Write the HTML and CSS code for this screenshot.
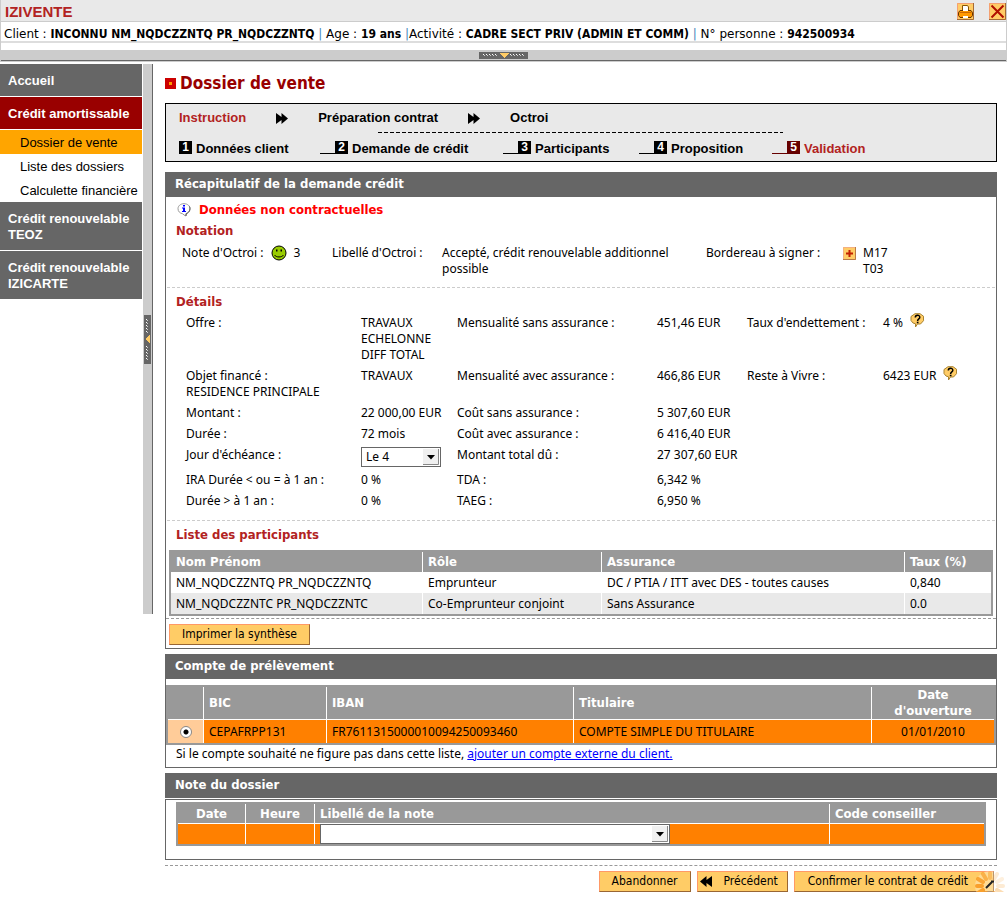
FILE: index.html
```html
<!DOCTYPE html>
<html lang="fr">
<head>
<meta charset="utf-8">
<title>IZIVENTE</title>
<link rel="stylesheet" href="styles.css">
</head>
<body>
<header class="top">
  <div class="brand-bar">
    <h1 class="brand">IZIVENTE</h1>
    <div class="brand-tools">
      <button class="tool" type="button" aria-label="Imprimer">
        <svg width="17" height="17" viewBox="0 0 17 17"><rect width="17" height="17" fill="#fc6"/><path d="M.5 17V.5H17" fill="none" stroke="#f4a070"/><path d="M16.500 0v16.500H0" fill="none" stroke="#a66a33"/><path d="M5.500 8V2.500h5L11.500 4v4" fill="#fff" stroke="#850"/><path d="M3 7.500h11l1.500 2v3l-1.500 2H3l-1.500-2v-3z" fill="#f90" stroke="#630"/><path d="M2.500 9.500h12" stroke="#c60"/><path d="M6 7h5v1H6z" fill="#fff"/><path d="M6 13h5v2H6z" fill="#fff"/></svg>
      </button>
      <button class="tool" type="button" aria-label="Fermer">
        <svg width="17" height="17" viewBox="0 0 17 17"><rect width="17" height="17" fill="#fc6"/><path d="M.5 17V.5H17" fill="none" stroke="#f4a070"/><path d="M16.500 0v16.500H0" fill="none" stroke="#a66a33"/><path d="M2.500 2.500l12 12M14.500 2.500l-12 12" stroke="#b01000" stroke-width="2"/></svg>
      </button>
    </div>
  </div>
  <p class="client">Client : <b>INCONNU NM_NQDCZZNTQ PR_NQDCZZNTQ</b> <i class="bar">|</i> Age : <b>19 ans</b> <i class="bar">|</i>Activité : <b>CADRE SECT PRIV (ADMIN ET COMM)</b> <i class="bar">|</i> N° personne : <b>942500934</b></p>
  <div class="fold">
    <svg width="49" height="7" viewBox="0 0 49 7" shape-rendering="crispEdges"><rect width="49" height="7" fill="#666"/><path d="M4 2.500h14M31 2.500h14" stroke="#fff" stroke-dasharray="1 2"/><path d="M5 3.500h14M32 3.500h14" stroke="#ccc" stroke-dasharray="1 2"/><path d="M20 1h10l-5 5z" fill="#fc6"/></svg>
  </div>
</header>

<div class="page">
  <nav class="side" aria-label="Menu">
    <a class="side-main" href="#accueil">Accueil</a>
    <a class="side-main side-open" href="#amortissable">Crédit amortissable</a>
    <div class="side-group">
      <a class="side-sub side-current" href="#dossier">Dossier de vente</a>
      <a class="side-sub" href="#liste">Liste des dossiers</a>
      <a class="side-sub" href="#calculette">Calculette financière</a>
    </div>
    <a class="side-main" href="#teoz">Crédit renouvelable TEOZ</a>
    <a class="side-main" href="#izicarte">Crédit renouvelable IZICARTE</a>
  </nav>
  <div class="splitter">
    <svg width="7" height="49" viewBox="0 0 7 49" shape-rendering="crispEdges"><rect width="7" height="49" fill="#666"/><path d="M2.500 4v14M2.500 31v14" stroke="#fff" stroke-dasharray="1 2"/><path d="M3.500 5v14M3.500 32v14" stroke="#ccc" stroke-dasharray="1 2"/><path d="M6 19v10L1 24z" fill="#fc6"/></svg>
  </div>

  <main class="main">
    <h2 class="title"><svg width="11" height="11" viewBox="0 0 11 11"><rect width="11" height="11" fill="#c00"/><rect x="4" y="4" width="3" height="3" fill="#f90"/></svg>Dossier de vente</h2>

    <section class="steps">
      <div class="phases">
        <span class="on">Instruction</span>
        <svg width="12" height="11" viewBox="0 0 12 11"><path d="M0 0l5.500 4V0L12 5.500 5.500 11V7L0 11z"/></svg>
        <span>Préparation contrat</span>
        <svg width="12" height="11" viewBox="0 0 12 11"><path d="M0 0l5.500 4V0L12 5.500 5.500 11V7L0 11z"/></svg>
        <span>Octroi</span>
      </div>
      <div class="dash"></div>
      <ol class="stages">
        <li class="stage"><b class="num">1</b>Données client</li>
        <li class="stage"><i class="lead"></i><b class="num">2</b>Demande de crédit</li>
        <li class="stage"><i class="lead"></i><b class="num">3</b>Participants</li>
        <li class="stage"><i class="lead"></i><b class="num">4</b>Proposition</li>
        <li class="stage on"><i class="lead"></i><b class="num">5</b>Validation</li>
      </ol>
    </section>

    <section class="panel">
      <h3 class="panel-head">Récapitulatif de la demande crédit</h3>
      <div class="panel-body">
        <p class="warn"><svg width="14" height="14" viewBox="0 0 14 14"><path d="M7 .7c3.500 0 6 2.200 6 5s-2 4.400-4 4.900L8.500 13 5.500 10.700C3 10.300 1 8.500 1 5.700S3.500.7 7 .7z" fill="#fff" stroke="#999"/><path d="M12.500 3.500c1.200 3-.2 6-3.200 7.200L9 13" fill="none" stroke="#555"/><path d="M6 2h2v1.500H6zM5 4.500h3V8h1v1H5V8h1V5.500H5z" fill="#00f"/></svg>Données non contractuelles</p>
        <h4 class="sub">Notation</h4>
        <div class="notation">
          <span class="inline">Note d'Octroi : <svg width="16" height="16" viewBox="0 0 16 16"><circle cx="8" cy="8" r="7" fill="#9c0" stroke="#000"/><path d="M5 4.500h1.500v2H5zM9.500 4.500H11v2H9.500z"/><path d="M3.500 10c1.500 2.600 7.500 2.600 9 0" fill="none" stroke="#000"/></svg> 3</span>
          <span>Libellé d'Octroi :</span>
          <span class="wide">Accepté, crédit renouvelable additionnel possible</span>
          <span>Bordereau à signer :</span>
          <span class="slips"><button class="plus" type="button" aria-label="Ouvrir le bordereau"><svg width="13" height="13" viewBox="0 0 13 13"><rect width="13" height="13" fill="#fc6"/><path d="M.5 13V.5H13" fill="none" stroke="#f4b080"/><path d="M12.500 0v12.500H0" fill="none" stroke="#b97a48"/><path d="M3 6.500h7M6.500 3v7" stroke="#c22000" stroke-width="2"/></svg></button><span>M17<br>T03</span></span>
        </div>
        <h4 class="sub ruled">Détails</h4>
        <div class="details">
          <span>Offre :</span><span>TRAVAUX<br>ECHELONNE<br>DIFF TOTAL</span><span>Mensualité sans assurance :</span><span>451,46 EUR</span><span>Taux d'endettement :</span>
          <span class="helped">4 % <svg class="help" width="15" height="15" viewBox="0 0 15 15"><path d="M5 .7h5l3.500 2.500v4.500L10.500 11H7.500L5.500 14v-3.200L3 10 1 7.500v-4z" fill="#fc6" stroke="#a98330"/><path d="M5.300 4.600c0-3 4.500-3 4.500-.4C9.800 6 7.600 5.700 7.600 8" fill="none" stroke="#000" stroke-width="1.500"/><rect x="6.800" y="8.700" width="1.700" height="1.600"/></svg></span>
          <span>Objet financé :<br>RESIDENCE PRINCIPALE</span><span>TRAVAUX</span><span>Mensualité avec assurance :</span><span>466,86 EUR</span><span>Reste à Vivre :</span>
          <span class="helped">6423 EUR <svg class="help" width="15" height="15" viewBox="0 0 15 15"><path d="M5 .7h5l3.500 2.500v4.500L10.500 11H7.500L5.500 14v-3.200L3 10 1 7.500v-4z" fill="#fc6" stroke="#a98330"/><path d="M5.300 4.600c0-3 4.500-3 4.500-.4C9.800 6 7.600 5.700 7.600 8" fill="none" stroke="#000" stroke-width="1.500"/><rect x="6.800" y="8.700" width="1.700" height="1.600"/></svg></span>
          <span>Montant :</span><span>22 000,00 EUR</span><span>Coût sans assurance :</span><span class="last">5 307,60 EUR</span>
          <span>Durée :</span><span>72 mois</span><span>Coût avec assurance :</span><span class="last">6 416,40 EUR</span>
          <label for="jour">Jour d'échéance :</label>
          <span class="pick pick-day"><select id="jour"><option>Le 4</option></select><svg class="pick-arrow" viewBox="0 0 16 16"><rect width="16" height="16" fill="#f0f0f0"/><path d="M0 15.500h15.500V0" fill="none" stroke="#888"/><path d="M4 6h8l-4 4.500z"/></svg></span>
          <span>Montant total dû :</span><span class="last">27 307,60 EUR</span>
          <span>IRA Durée &lt; ou = à 1 an :</span><span>0 %</span><span>TDA :</span><span class="last">6,342 %</span>
          <span>Durée &gt; à 1 an :</span><span>0 %</span><span>TAEG :</span><span class="last">6,950 %</span>
        </div>
        <h4 class="sub ruled">Liste des participants</h4>
        <div class="people-wrap">
          <table class="grid people">
            <colgroup><col class="p1"><col class="p2"><col class="p3"><col class="p4"></colgroup>
            <thead><tr><th>Nom Prénom</th><th>Rôle</th><th>Assurance</th><th>Taux (%)</th></tr></thead>
            <tbody>
              <tr><td>NM_NQDCZZNTQ PR_NQDCZZNTQ</td><td>Emprunteur</td><td>DC / PTIA / ITT avec DES - toutes causes</td><td>0,840</td></tr>
              <tr><td>NM_NQDCZZNTC PR_NQDCZZNTC</td><td>Co-Emprunteur conjoint</td><td>Sans Assurance</td><td>0.0</td></tr>
            </tbody>
          </table>
        </div>
        <div class="print"><button class="btn" type="button">Imprimer la synthèse</button></div>
      </div>
    </section>

    <section class="panel">
      <h3 class="panel-head">Compte de prélèvement</h3>
      <div class="panel-body account">
        <table class="grid lined accounts">
          <colgroup><col class="a1"><col class="a2"><col class="a3"><col class="a4"><col class="a5"></colgroup>
          <thead><tr><th></th><th>BIC</th><th>IBAN</th><th>Titulaire</th><th class="mid">Date d'ouverture</th></tr></thead>
          <tbody><tr><td class="radio-cell"><input class="radio" type="radio" name="compte" aria-label="CEPAFRPP131" checked></td><td>CEPAFRPP131</td><td>FR7611315000010094250093460</td><td>COMPTE SIMPLE DU TITULAIRE</td><td class="mid">01/01/2010</td></tr></tbody>
        </table>
        <p class="hint">Si le compte souhaité ne figure pas dans cette liste, <a href="#compte">ajouter un compte externe du client.</a></p>
      </div>
    </section>

    <section class="panel">
      <h3 class="panel-head">Note du dossier</h3>
      <div class="panel-body notes-body">
        <table class="grid lined notes">
          <colgroup><col class="n1"><col class="n2"><col class="n3"><col class="n4"></colgroup>
          <thead><tr><th class="mid">Date</th><th class="mid">Heure</th><th>Libellé de la note</th><th>Code conseiller</th></tr></thead>
          <tbody><tr><td></td><td></td><td><span class="pick pick-note"><select aria-label="Libellé de la note"><option></option></select><svg class="pick-arrow" viewBox="0 0 16 16"><rect width="16" height="16" fill="#f0f0f0"/><path d="M0 15.500h15.500V0" fill="none" stroke="#888"/><path d="M4 6h8l-4 4.500z"/></svg></span></td><td></td></tr></tbody>
        </table>
      </div>
    </section>

    <footer class="actions">
      <button class="btn" type="button">Abandonner</button>
      <button class="btn btn-prev" type="button"><svg width="12" height="11" viewBox="0 0 12 11"><path d="M12 0L6.500 4V0L0 5.500 6.500 11V7l5.500 4z"/></svg>Précédent</button>
      <button class="btn btn-next" type="button">Confirmer le contrat de crédit
        <svg class="spinner" width="34" height="34" viewBox="0 0 34 34"><circle cx="17" cy="17" r="15" fill="#fff" opacity=".3"/><path d="M13 19l6-6M18 12.500h3" fill="none" stroke="#222" stroke-width="2"/><g stroke="#f9a02c" stroke-width="4" stroke-linecap="round"><path d="M17 9V4" opacity=".5"/><path d="M21 10l3-5" opacity=".2"/><path d="M24 13l5-3" opacity=".15"/><path d="M25 17h5" opacity=".2"/><path d="M24 21l5 3" opacity=".35"/><path d="M21 24l3 5" opacity=".6"/><path d="M17 25v5" opacity=".75"/><path d="M13 24l-3 5" opacity=".9"/><path d="M10 21l-5 3"/><path d="M9 17H4"/><path d="M10 13L5 10" opacity=".9"/><path d="M13 10l-3-5" opacity=".7"/></g></svg>
      </button>
    </footer>
  </main>
</div>
</body>
</html>
```
FILE: styles.css
```css
* { box-sizing: border-box; }

body {
  margin: 0;
  background: #fff;
  color: #000;
  font: 12px/16px "Noto Sans", "DejaVu Sans", sans-serif;
}

h1, h2, h3, h4, p, ol { margin: 0; padding: 0; }
svg { display: block; flex: none; }
button { padding: 0; border: 0; background: none; font: inherit; color: inherit; }
b, th, .title, .panel-head, .sub, .warn { font-family: "DejaVu Sans Condensed", "DejaVu Sans", sans-serif; }

.top { border-left: 1px solid #ccc; border-right: 1px solid #ccc; }
.brand-bar {
  display: flex;
  justify-content: space-between;
  height: 22px;
  background: #e9e9e9;
  border-bottom: 1px solid #ccc;
}
.brand { padding: 3px 4px 0; font: bold 15px/18px "Liberation Sans", Arial, sans-serif; color: #b22222; }
.brand-tools { display: flex; gap: 15px; padding-top: 1px; }
.client { height: 21px; padding: 4px 3px 0; border-bottom: 2px solid #ddd; font-family: "DejaVu Sans", sans-serif; white-space: nowrap; }
.bar { font-style: normal; color: #48b; }
.fold {
  display: flex;
  justify-content: center;
  margin-top: 7px;
  height: 12px;
  padding-top: 2px;
  background: #ccc;
  border-bottom: 1px solid #ccc;
  box-shadow: inset 0 -1px #666;
}

.page { display: flex; align-items: flex-start; padding-top: 2px; }

.side { display: flex; flex-direction: column; gap: 1px; width: 142px; font: 13px/16px "Liberation Sans", Arial, sans-serif; flex: none; }
.side a { color: #000; text-decoration: none; }
.side .side-main { padding: 9px 8px 7px; background: #666; color: #fff; font-weight: bold; }
.side .side-open { background: #900; }
.side-sub { display: block; padding: 5px 0 3px 20px; white-space: nowrap; }
.side .side-current { background: #ffa500; }
.side-group { margin-bottom: -1px; }

.splitter {
  display: flex;
  align-items: center;
  width: 10px;
  height: 550px;
  margin-left: 1px;
  padding-left: 1px;
  background: #ccc;
  border-right: 1px solid #666;
  flex: none;
}

.main { flex: 1; min-width: 0; padding: 8px 10px 0 12px; }
.title { display: flex; align-items: center; gap: 4px; margin-bottom: 9px; font-size: 17px; line-height: 22px; color: #900; }

.steps {
  height: 59px;
  margin-bottom: 10px;
  padding: 6px 13px 4px;
  background: #e9e9e9;
  border: 1px solid #000;
  font: bold 13px/16px "Liberation Sans", Arial, sans-serif;
}
.phases { display: flex; align-items: center; gap: 30px; }
.dash { width: 405px; height: 1px; margin: 6px 0 8px 199px; background: repeating-linear-gradient(90deg, #000 0 4px, transparent 4px 6px); }
.stages { display: grid; grid-template-columns: 141px 183px 136px 133px auto; list-style: none; }
.stage { display: flex; align-items: flex-start; white-space: nowrap; }
.num { width: 13px; height: 13px; margin-right: 4px; background: #000; color: #fff; font: bold 12px/13px "Liberation Sans", Arial, sans-serif; text-align: center; }
.lead { width: 15px; height: 13px; border-bottom: 1px solid #000; }
.on { color: #b22222; }
.on .num { background: #600; }
.on .lead { border-color: #600; }

.panel { margin-bottom: 5px; }
.panel-head { padding: 4px 10px 5px; background: #666; color: #fff; font-size: 13px; line-height: 16px; }
.panel-body { border: 1px solid #666; border-top: 0; }
.warn { display: flex; align-items: center; gap: 8px; padding: 4px 0 0 11px; color: #f00; font-weight: bold; font-size: 13px; line-height: 18px; }
.sub { padding: 3px 10px 0; color: #b22222; font-size: 13px; line-height: 18px; }
.ruled { margin: 0 1px; padding: 5px 9px 0; border-top: 1px dashed #ccc; }

.notation {
  display: grid;
  grid-template-columns: 150fr 110fr 264fr 137fr 150fr;
  padding: 5px 3px 10px 16px;
}
.inline, .helped { display: flex; align-items: flex-start; gap: 7px; }
.help { margin-top: -2px; }
.wide { padding-right: 24px; }
.slips { display: flex; gap: 7px; align-items: flex-start; }
.plus { margin-top: 2px; }

.details {
  display: grid;
  grid-template-columns: 175fr 96fr 200fr 90fr 136fr 110fr;
  row-gap: 5px;
  padding: 4px 3px 11px 20px;
}
.last { grid-column: 4 / -1; }

.pick { position: relative; display: block; height: 20px; }
.pick select {
  display: block;
  width: 100%;
  height: 100%;
  padding: 0 20px 0 4px;
  appearance: none;
  background: #fff;
  border: 1px solid #666;
  border-radius: 0;
  color: #000;
  font: inherit;
}
.pick-arrow { position: absolute; top: 2px; right: 2px; width: 16px; height: 16px; pointer-events: none; }
.pick-day { width: 80px; }
.pick-note { width: 350px; max-width: 100%; }

.grid { width: 100%; table-layout: fixed; border-spacing: 0; border: 2px solid #999; }
.grid th { padding: 2px 5px; background: #999; color: #fff; font-size: 13px; text-align: left; }
.grid td { padding: 3px 5px 2px; }
.grid th + th, .grid td + td { border-left: 1px solid #fff; }
.grid .mid { text-align: center; }

.people-wrap { margin: 6px 0 2px; padding: 0 3px; }
.people tbody tr:nth-child(2) { background: #e9e9e9; }
.p1 { width: 251px; }
.p2 { width: 179px; }
.p4 { width: 87px; }
.print { padding: 5px 3px 3px; border-top: 1px dashed #999; }

.grid.lined th { padding: 2px 5px 1px; border-bottom: 1px solid #fff; }
.lined td { background: #ff8000; }
.account { padding-top: 6px; }
.grid.accounts th { padding: 0 5px; }
.grid.accounts td { padding: 4px 5px 3px; }
.accounts .radio-cell { background: #ffcc99; text-align: center; }
.a1 { width: 35px; }
.a2 { width: 123px; }
.a3 { width: 247px; }
.a5 { width: 123px; }
.radio { display: block; width: 12px; height: 12px; margin: 0 auto; appearance: none; border: 1px solid #888; border-radius: 50%; background: radial-gradient(#000 0 2px, #fff 3px); }
.hint { padding: 1px 10px 5px; }
.hint a { color: #00f; }

.notes-body { margin-top: 1px; padding: 2px 10px 13px; border-top: 1px solid #666; }
.grid.notes td { height: 20px; padding: 0 5px; }
.n1 { width: 67px; }
.n2 { width: 69px; }
.n4 { width: 155px; }

.btn {
  height: 21px;
  padding: 0 12px;
  background: #fc6;
  border: 1px solid;
  border-color: #f96 #963 #963 #f96;
  font: 12px/19px "DejaVu Sans Condensed", "DejaVu Sans", sans-serif;
  white-space: nowrap;
}
.actions { display: flex; justify-content: flex-end; gap: 6px; padding: 5px 3px 0; border-top: 1px dashed #999; }
.btn-prev { display: flex; align-items: center; gap: 12px; padding: 0 9px 0 2px; }
.btn-next { position: relative; padding: 0 25px 0 13px; }
.spinner { position: absolute; top: -3px; right: -14px; }
```
